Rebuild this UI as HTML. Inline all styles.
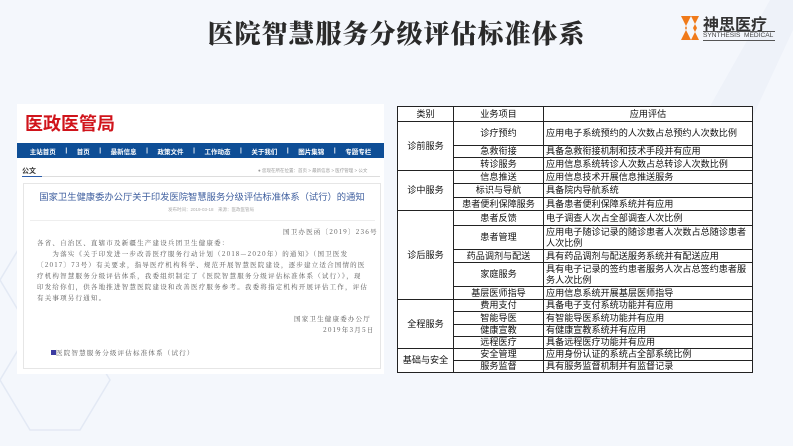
<!DOCTYPE html>
<html><head><meta charset="utf-8"><style>
*{margin:0;padding:0;box-sizing:border-box}
body{width:793px;height:446px;overflow:hidden;background:#f4f7fc;font-family:"Liberation Sans","Noto Sans CJK SC",sans-serif;position:relative}
.abs{position:absolute}
.title{left:0;width:793px;top:14px;text-align:center;font-family:"Noto Serif CJK SC",serif;font-weight:900;font-size:26px;color:#2a2a2a;letter-spacing:1px}
.panel{left:17px;top:104px;width:367px;height:270px;background:#fff}
.nav{left:17px;top:143px;width:367px;height:15px;background:#0e4e96;color:#fff;font-size:6.5px;font-weight:bold;display:flex;align-items:center;justify-content:space-around;padding:0 8px}
.inner{left:23px;top:183px;width:358px;height:186px;border:1px solid #e6e6e6}
.txt{font-family:"Noto Serif CJK SC",serif;font-size:6.5px;color:#555;line-height:11px;letter-spacing:1.2px}
table{position:absolute;left:397px;top:106px;border-collapse:collapse;font-size:9.1px;color:#111;background:#fff}
td,th{border:1px solid #222;padding:0 2px;line-height:11px;font-weight:normal}
td.c{text-align:center}
th{background:#fff;text-align:center;height:15px}
</style></head><body>
<svg class="abs" style="left:0;top:220px" width="200" height="226"><g stroke="#e3e9f4" fill="none" stroke-width="1.5"><path d="M0 60 L30 10 L80 10 L110 60 L80 110 L30 110Z M110 60 L140 10 L190 10"/><path d="M30 110 L0 160 L30 210 L80 210 L110 160 L80 110"/></g></svg>
<svg class="abs" style="left:600px;top:0" width="193" height="446"><path d="M193 30 L193 0 L170 0 L40 230 L100 230Z" fill="#eef2f9"/></svg>
<div class="abs title">医院智慧服务分级评估标准体系</div>
<svg class="abs" style="left:679px;top:14px" width="24" height="28"><path d="M2 2 H12 L6 14 L12 26 H2 L8 14Z" fill="#f07a1a"/><path d="M12 2 H20 L14 14 L20 26 H12 L18 14Z" fill="#f07a1a"/></svg>
<div class="abs" style="left:703px;top:11px;font-size:16px;font-weight:bold;color:#333">神思医疗</div>
<div class="abs" style="left:703px;top:31px;font-size:6.6px;color:#444;border-top:1px solid #555;border-bottom:1px solid #555;line-height:8px;width:72px">SYNTHESIS&nbsp; MEDICAL</div>

<div class="abs panel"></div>
<div class="abs" style="left:25px;top:110px;font-size:18px;font-weight:bold;color:#d0141b">医政医管局</div>
<div class="abs nav"><span>主站首页</span><span>|</span><span>首页</span><span>|</span><span>最新信息</span><span>|</span><span>政策文件</span><span>|</span><span>工作动态</span><span>|</span><span>关于我们</span><span>|</span><span>图片集锦</span><span>|</span><span>专题专栏</span></div>
<div class="abs" style="left:22px;top:166px;font-size:7px;font-weight:bold;color:#333">公文</div>
<div class="abs" style="left:22px;top:176px;width:358px;border-top:1px solid #ddd"></div>
<div class="abs" style="left:22px;top:176px;width:20px;border-top:1px solid #2a5caa"></div>
<div class="abs" style="left:258px;top:168px;font-size:4.5px;color:#999">● 您现在所在位置：首页 &gt; 最新信息 &gt; 医疗管理 &gt; 公文</div>
<div class="abs inner"></div>
<div class="abs" style="left:23px;top:189px;width:358px;text-align:center;font-size:9.3px;color:#3f5f9f">国家卫生健康委办公厅关于印发医院智慧服务分级评估标准体系（试行）的通知</div>
<div class="abs" style="left:168px;top:207px;font-size:4.5px;color:#aaa">发布时间：2019-03-18　来源：医政医管局</div>
<div class="abs" style="left:30px;top:220px;width:345px;border-top:1px solid #eee"></div>
<div class="abs txt" style="left:283px;top:226px">国卫办医函〔2019〕236号</div>
<div class="abs txt" style="left:37px;top:237px;width:332px">各省、自治区、直辖市及新疆生产建设兵团卫生健康委：<br>　　为落实《关于印发进一步改善医疗服务行动计划（2018—2020年）的通知》（国卫医发〔2017〕73号）有关要求，指导医疗机构科学、规范开展智慧医院建设，逐步建立适合国情的医疗机构智慧服务分级评估体系，我委组织制定了《医院智慧服务分级评估标准体系（试行）》，现印发给你们，供各地推进智慧医院建设和改善医疗服务参考。我委将指定机构开展评估工作，评估有关事项另行通知。</div>
<div class="abs txt" style="left:294px;top:313px">国家卫生健康委办公厅</div>
<div class="abs txt" style="left:323px;top:324px">2019年3月5日</div>
<div class="abs txt" style="left:51px;top:347px"><span style="display:inline-block;width:5px;height:5px;background:#3a3aa0"></span>医院智慧服务分级评估标准体系（试行）</div>

<table>
<tr><th style="width:56px">类别</th><th style="width:90px">业务项目</th><th style="width:209px">应用评估</th></tr>
<tr style="height:24px"><td class="c" rowspan="3">诊前服务</td><td class="c">诊疗预约</td><td>应用电子系统预约的人次数占总预约人次数比例</td></tr>
<tr style="height:12px"><td class="c">急救衔接</td><td>具备急救衔接机制和技术手段并有应用</td></tr>
<tr style="height:13px"><td class="c">转诊服务</td><td>应用信息系统转诊人次数占总转诊人次数比例</td></tr>
<tr style="height:13px"><td class="c" rowspan="3">诊中服务</td><td class="c">信息推送</td><td>应用信息技术开展信息推送服务</td></tr>
<tr style="height:14px"><td class="c">标识与导航</td><td>具备院内导航系统</td></tr>
<tr style="height:13px"><td class="c">患者便利保障服务</td><td>具备患者便利保障系统并有应用</td></tr>
<tr style="height:15px"><td class="c" rowspan="5">诊后服务</td><td class="c">患者反馈</td><td>电子调查人次占全部调查人次比例</td></tr>
<tr style="height:24px"><td class="c">患者管理</td><td>应用电子随诊记录的随诊患者人次数占总随诊患者人次比例</td></tr>
<tr style="height:13px"><td class="c">药品调剂与配送</td><td>具有药品调剂与配送服务系统并有配送应用</td></tr>
<tr style="height:24px"><td class="c">家庭服务</td><td>具有电子记录的签约患者服务人次占总签约患者服务人次比例</td></tr>
<tr style="height:13px"><td class="c">基层医师指导</td><td>应用信息系统开展基层医师指导</td></tr>
<tr style="height:12px"><td class="c" rowspan="4">全程服务</td><td class="c">费用支付</td><td>具备电子支付系统功能并有应用</td></tr>
<tr style="height:13px"><td class="c">智能导医</td><td>有智能导医系统功能并有应用</td></tr>
<tr style="height:12px"><td class="c">健康宣教</td><td>有健康宣教系统并有应用</td></tr>
<tr style="height:12px"><td class="c">远程医疗</td><td>具备远程医疗功能并有应用</td></tr>
<tr style="height:12px"><td class="c" rowspan="2">基础与安全</td><td class="c">安全管理</td><td>应用身份认证的系统占全部系统比例</td></tr>
<tr style="height:12px"><td class="c">服务监督</td><td>具有服务监督机制并有监督记录</td></tr>
</table>
</body></html>
